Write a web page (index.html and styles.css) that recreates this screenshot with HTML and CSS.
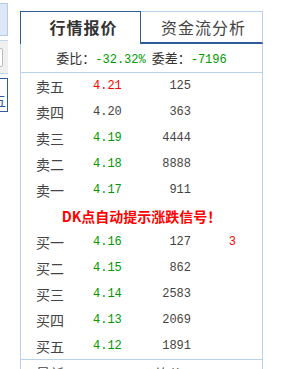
FILE: index.html
```html
<!DOCTYPE html>
<html lang="zh-CN">

<head>
 <meta charset="UTF-8">
 <meta name="viewport" content="width=device-width, initial-scale=1.0">
 <title>行情报价</title>
 <link rel="stylesheet" href="styles.css">
</head>

<body>
 <div class="page">
  <div class="side">
   <div class="side-box blue"></div>
   <div class="side-box gray"><span class="side-input"></span></div>
   <div class="side-box link">五</div>
  </div>

  <div class="panel">
   <div class="tabs">
    <div class="tab on">行情报价</div>
    <div class="tab">资金流分析</div>
   </div>
   <div class="inner">
    <div class="ratio">委比：<span class="green gap">-32.32%</span>委差：<span class="green">-7196</span></div>
    <ul class="book">
     <li><span class="lbl">卖五</span><span class="num red">4.21</span><span class="vol">125</span><span class="ext"></span></li>
     <li><span class="lbl">卖四</span><span class="num">4.20</span><span class="vol">363</span><span class="ext"></span></li>
     <li><span class="lbl">卖三</span><span class="num green">4.19</span><span class="vol">4444</span><span class="ext"></span></li>
     <li><span class="lbl">卖二</span><span class="num green">4.18</span><span class="vol">8888</span><span class="ext"></span></li>
     <li><span class="lbl">卖一</span><span class="num green">4.17</span><span class="vol">911</span><span class="ext"></span></li>
     <li class="notice">DK点自动提示涨跌信号！</li>
     <li><span class="lbl">买一</span><span class="num green">4.16</span><span class="vol">127</span><span class="ext red">3</span></li>
     <li><span class="lbl">买二</span><span class="num green">4.15</span><span class="vol">862</span><span class="ext"></span></li>
     <li><span class="lbl">买三</span><span class="num green">4.14</span><span class="vol">2583</span><span class="ext"></span></li>
     <li><span class="lbl">买四</span><span class="num green">4.13</span><span class="vol">2069</span><span class="ext"></span></li>
     <li><span class="lbl">买五</span><span class="num green">4.12</span><span class="vol">1891</span><span class="ext"></span></li>
    </ul>
    <ul class="book foot">
     <li><span class="lbl">最新</span><span class="num"></span><span class="vol lbl2">均价</span><span class="ext"></span></li>
    </ul>
   </div>
  </div>
 </div>
</body>

</html>
```

FILE: styles.css
```css
body {
 margin: 0;
 overflow: hidden;
 font-family: "Noto Sans CJK SC", "DejaVu Sans", sans-serif;
 color: #333;
 background: #fff;
}

.page {
 display: flex;
 gap: 12px;
 height: 369px;
}

/* cut off controls on the left */
.side {
 width: 8px;
 overflow: hidden;
 display: flex;
 flex-direction: column;
 align-items: flex-end;
 padding-top: 3px;
 gap: 4px;
}

.side-box {
 width: 40px;
 flex-shrink: 0;
 box-sizing: border-box;
}

.side-box.blue {
 height: 33px;
 background: #dce8f8;
 border: 1px solid #b4cbe8;
}

.side-box.gray {
 height: 34px;
 margin-right: -1px;
 background: #efefef;
 border-top: 1px solid #c4d6ea;
 border-bottom: 1px solid #c4d6ea;
 display: flex;
 justify-content: flex-end;
 align-items: center;
 padding-right: 6px;
}

.side-input {
 width: 20px;
 height: 17px;
 background: #fff;
 border: 1px solid #bbb;
 border-radius: 2px;
}

.side-box.link {
 height: 34px;
 border: 1px solid #2e5c9a;
 color: #2e5c9a;
 font-size: 14px;
 text-align: right;
 padding: 11px 1px 0 0;
}

.panel {
 width: 243px;
 margin-top: 11px;
}

.tabs {
 display: flex;
}

.tab {
 box-sizing: border-box;
 height: 33px;
 font-size: 16px;
 letter-spacing: 1px;
 text-align: center;
 line-height: 30px;
 padding-left: 4px;
}

.tab.on {
 width: 121px;
 border: 1px solid #2e5c9a;
 border-bottom: 0;
 font-weight: bold;
 padding-left: 6px;
}

.tab:not(.on) {
 width: 122px;
 border-top: 1px solid #b9d1ea;
 border-right: 1px solid #b9d1ea;
 border-bottom: 2px solid #2e5c9a;
 color: #444;
 line-height: 31px;
}

.inner {
 border: 1px solid #b9d1ea;
 border-top: 0;
 height: 330px;
}

.ratio {
 height: 28px;
 line-height: 28px;
 border-bottom: 1px solid #b9d1ea;
 font-size: 13px;
 text-align: center;
}

.ratio span {
 font-family: "Liberation Mono", monospace;
 font-size: 12px;
}

.ratio span.gap {
 margin-right: 6px;
}

ul.book {
 list-style-type: none;
 margin: 0;
 padding: 0;
}

ul.book li {
 display: grid;
 grid-template-columns: 57px 40px 58px 45px;
 height: 26px;
 align-items: center;
 padding-left: 15px;
}

.lbl {
 font-size: 14px;
 color: #444;
}

.num, .vol, .ext {
 font-family: "Liberation Mono", monospace;
 font-size: 12px;
 color: #444;
}

.vol, .ext {
 text-align: right;
}

ul.book li.notice {
 display: block;
 padding-left: 0;
 line-height: 26px;
 text-align: center;
 font-size: 14px;
 font-weight: bold;
 color: #ff0000;
}

ul.foot {
 border-top: 1px solid #b9d1ea;
}

.vol.lbl2 {
 font-family: "Noto Sans CJK SC", sans-serif;
 font-size: 14px;
 text-align: left;
 padding-left: 22px;
}

.green {
 color: #009900;
}

.red {
 color: #ff0000;
}
```
